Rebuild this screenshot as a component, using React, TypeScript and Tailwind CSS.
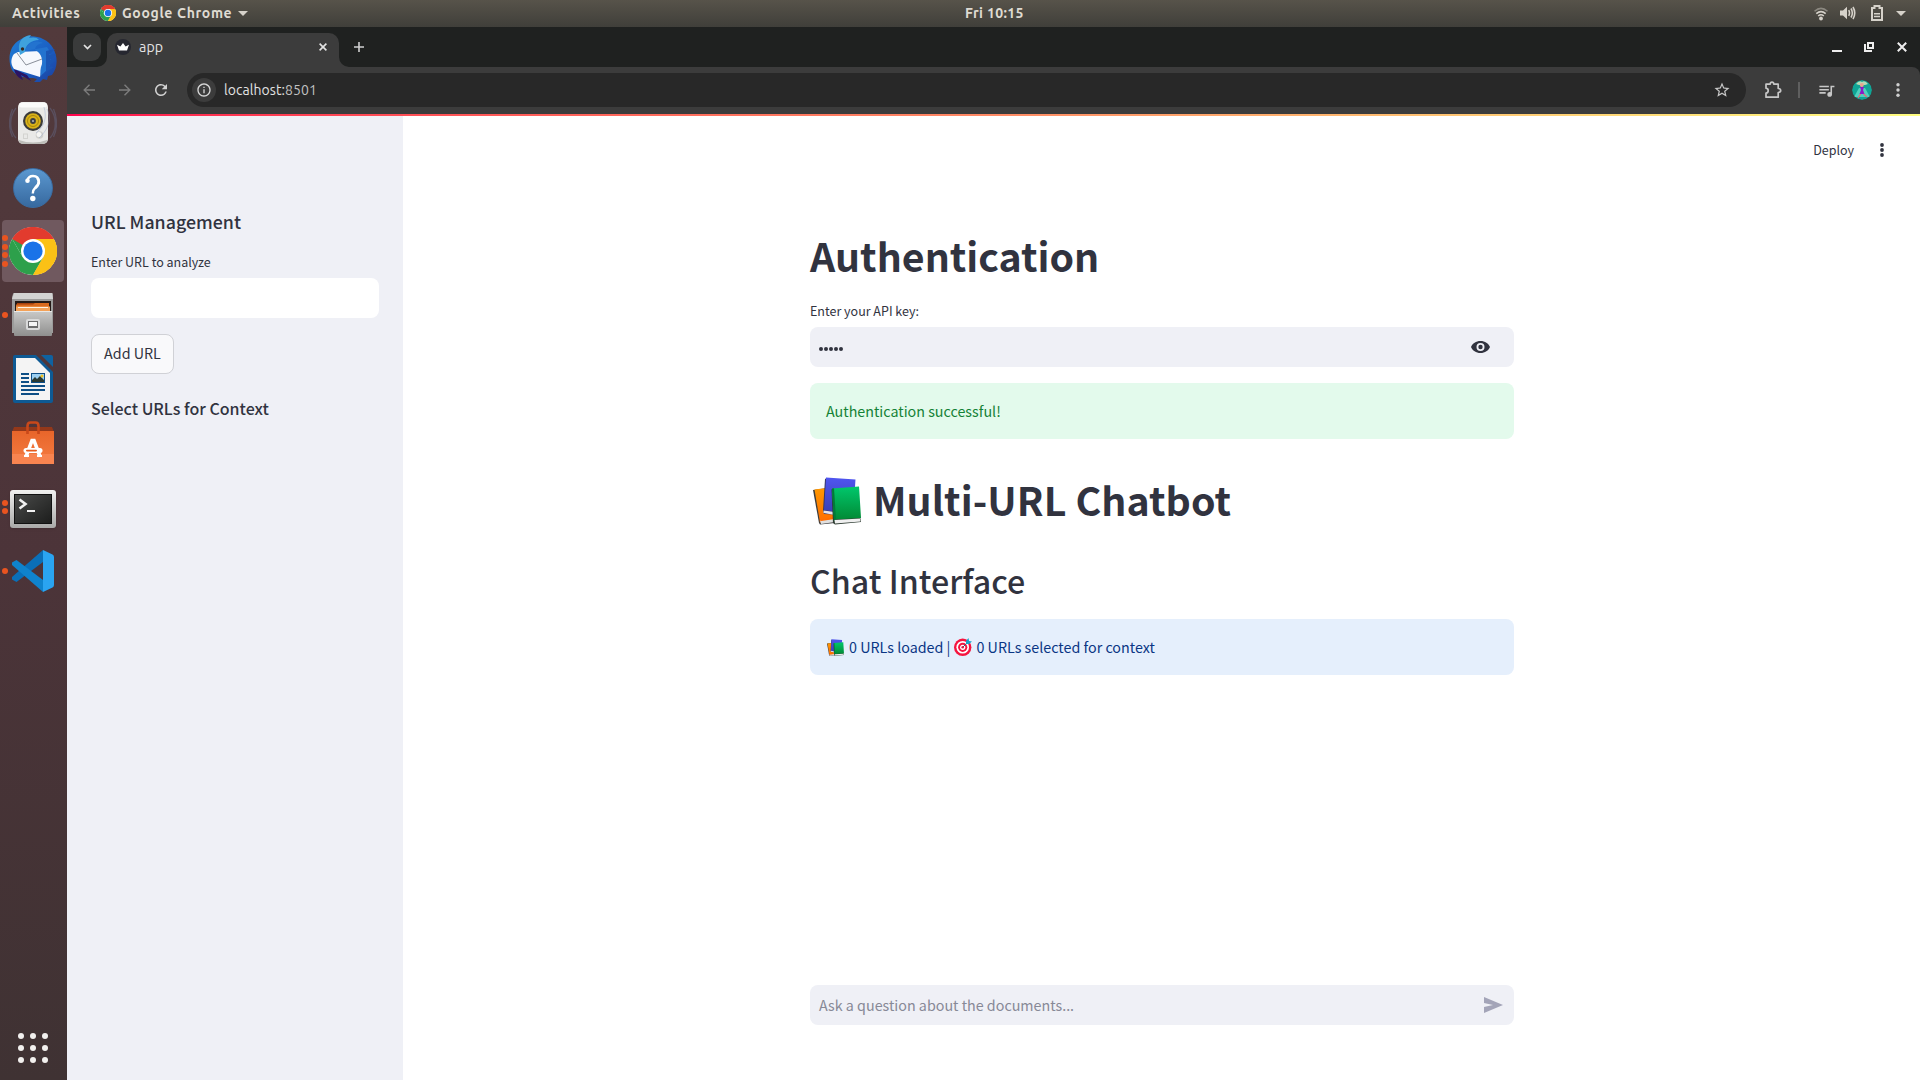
import React from 'react';
import { MdRefresh, MdStarBorder, MdQueueMusic, MdOutlineInfo } from 'react-icons/md';

const UI = "font-['Ubuntu','Noto_Sans',sans-serif]";
const PAGE = "font-['Noto_Sans_CJK_SC','Noto_Sans',sans-serif]";

function ChromeLogo({ size }: { size: number }) {
  return (
    <svg width={size} height={size} viewBox="0 0 48 48">
      <circle cx="24" cy="24" r="24" fill="#fff" />
      <path d="M24 24 3.2 12A24 24 0 0 1 44.8 12Z" fill="#e23b2e" />
      <path d="M44.8 12A24 24 0 0 1 24 48L34.4 30 24 12Z" fill="#fbc116" />
      <path d="M24 48A24 24 0 0 1 3.2 12L13.6 30 34.4 30Z" fill="#2da04b" />
      <path d="M3.2 12 13.6 30 24 12Z" fill="#2da04b" />
      <path d="M3.2 12A24 24 0 0 1 44.8 12H24L13.6 18Z" fill="#e23b2e" />
      <path d="M24 12H44.8A24 24 0 0 1 24 48L34.4 30Z" fill="#fbc116" />
      <circle cx="24" cy="24" r="12" fill="#fff" />
      <circle cx="24" cy="24" r="9.6" fill="#1a73e8" />
    </svg>
  );
}

function Thunderbird() {
  return (
    <svg width="48" height="48" viewBox="0 0 48 48">
      <defs>
        <linearGradient id="tb" x1="0" y1="0" x2="1" y2="1">
          <stop offset="0" stopColor="#1f7fd6" />
          <stop offset=".55" stopColor="#1b5fc4" />
          <stop offset="1" stopColor="#1c3f9c" />
        </linearGradient>
      </defs>
      <path d="M14 3C22-1 38 2 44 13c5 9 5 19-1 27l-4 1-1 4-4-1-3 3-6 0 3-3-4-1C14 43 7 41 3 35-1 27-1 13 9 6Z" fill="url(#tb)" />
      <path d="M5 34c1 6 5 9 9 11l-2-5 10 6-4-6Z" fill="#2a1464" />
      <path d="M9 17 32 16 34 26 31 42 5 34C1 29 2 23 5 19Z" fill="#f6f8fd" />
      <path d="M8 18 17 30 33 24" fill="none" stroke="#8a8f99" strokeWidth="1" />
      <path d="M10 15C9 6 14 1 22 0l-2 3c4-1 8-1 10 2-8 0-14 5-14 12l-5 3Z" fill="#3fa2dd" />
      <path d="M16 16C18 8 26 4 34 8c-6 1-8 4-8 7 5 2 8 8 7 14-2 5-2 9-1 12 2-3 5-4 8-9 3-7 2-15-2-20" fill="#2373cf" />
      <path d="M37 16l9-2-6 6 7-1-6 6 6 0-7 6 5 1-8 5" fill="#1b55b3" />
      <circle cx="13.500" cy="14" r="1.700" fill="#3a2a20" />
    </svg>
  );
}

function Speaker() {
  return (
    <svg width="48" height="48" viewBox="0 0 48 48">
      <g fill="none" stroke="#6d7fa8" strokeOpacity=".32" strokeWidth="1.300">
        <path d="M7 9C0 18 0 31 7 39M41 9C48 18 48 31 41 39M3.500 10C-.5 19-.5 30 3.500 38M44.500 10C48.500 19 48.500 30 44.500 38" />
      </g>
      <rect x="9" y="3" width="30" height="42" rx="5" fill="#e9e9e7" />
      <rect x="10" y="3.500" width="28" height="5" rx="2.500" fill="#fbfbfa" />
      <path d="M10 41q14 5 28 0v1q-1 3-5 3H14q-3 0-4-3Z" fill="#bdbdb9" />
      <circle cx="24" cy="22" r="10" fill="#3b3b3b" />
      <circle cx="24" cy="22" r="7.800" fill="#d9b21a" />
      <circle cx="24" cy="22" r="5.500" fill="none" stroke="#a98608" />
      <circle cx="24" cy="22" r="2.900" fill="#3c3f44" />
      <circle cx="24" cy="22" r="1.100" fill="#a9adb3" />
      <rect x="14.500" y="35" width="4" height="4.500" fill="none" stroke="#d3d3d0" />
      <circle cx="30.500" cy="36" r="3.800" fill="#cfcfcb" />
      <circle cx="30" cy="35.500" r="2.500" fill="#f5f5f3" />
      <path d="M38 10c4 8 3 19-8 29M35 8c3 10 1 19-8 26" fill="none" stroke="#8ea2cc" strokeOpacity=".4" />
    </svg>
  );
}

function Help() {
  return (
    <div className="mt-[2px] flex size-10 items-center justify-center rounded-full border border-[#3a6da3] bg-linear-to-b from-[#5b98d0] to-[#37699f]">
      <svg width="18" height="28" viewBox="0 0 18 28">
        <path d="M3 7C4 3.500 6.500 2 9 2c3.500 0 5.700 2 5.700 5.500C14.700 12.500 8.800 13 8.800 19.500" fill="none" stroke="#fff" strokeWidth="2.400" />
        <path d="M13 4C17 8 14 12 11.500 14" fill="none" stroke="#fff" strokeWidth="2.400" />
        <circle cx="3.500" cy="6.800" r="2.300" fill="#fff" />
        <circle cx="8.800" cy="24.500" r="2.700" fill="#fff" />
      </svg>
    </div>
  );
}

function Files() {
  return (
    <svg width="48" height="48" viewBox="0 0 48 48">
      <defs>
        <linearGradient id="fl" x1="0" y1="0" x2="0" y2="1">
          <stop offset="0" stopColor="#c9c9c8" />
          <stop offset="1" stopColor="#8f8f8e" />
        </linearGradient>
      </defs>
      <path d="M4 3q0-1 1-1H43q1 0 1 1V42H3V6Z" fill="#9c9c9b" />
      <path d="M5 2H43l1 6H3Z" fill="#d3d3d2" />
      <rect x="6" y="10" width="36" height="11" fill="#241a16" />
      <path d="M8 12H40V15H8Z" fill="#a4410e" />
      <path d="M7 13.500H24L26 12H40V20H7Z" fill="#d96a1e" />
      <path d="M7 15.500H41V20H7Z" fill="#f4a258" />
      <path d="M9 16H39V17H9Z" fill="#fff3e3" />
      <rect x="5" y="20" width="38" height="25" rx="1" fill="url(#fl)" />
      <path d="M5 20.500H43" stroke="#e8e8e7" />
      <rect x="17" y="28" width="14" height="11" rx="2" fill="#dadada" />
      <rect x="19" y="30" width="10" height="7" fill="#6b6b6b" />
      <rect x="20" y="31" width="8" height="4" fill="#f4f4f4" />
    </svg>
  );
}

function Writer() {
  return (
    <svg width="40" height="48" viewBox="0 0 40 48">
      <path d="M2 0H23L40 17V46q0 2-2 2H2q-2 0-2-2V2Q0 0 2 0Z" fill="#0e5a94" />
      <path d="M28 0H38q2 0 2 2V12Z" fill="#0f62a0" />
      <path d="M3 3H22L37 18V45H3Z" fill="#f4f4f4" />
      <path d="M8 19H16M8 23H16M8 27H16M8 31H32M8 35H32M8 39H26" stroke="#0e4f86" strokeWidth="2" />
      <rect x="18" y="18" width="14" height="10" fill="#0e4f86" />
      <rect x="19" y="19" width="12" height="8" fill="#9cd0f2" />
      <path d="M19 27v-2l3-3 2 2 3-3 4 4v2Z" fill="#2b3a33" />
      <circle cx="29" cy="21" r="1.500" fill="#f2c11d" />
    </svg>
  );
}

function Software() {
  return (
    <svg width="42" height="44" viewBox="0 0 42 44">
      <defs>
        <linearGradient id="sw" x1="0" y1="0" x2="0" y2="1">
          <stop offset="0" stopColor="#e8652a" />
          <stop offset="1" stopColor="#f57d43" />
        </linearGradient>
      </defs>
      <path d="M2 6H40L42 11H0Z" fill="#93381a" />
      <path d="M0 10H42V43H0Z" fill="url(#sw)" />
      <path d="M0 33H42V43H0Z" fill="#f88450" />
      <path d="M15.500 13V5q0-3.500 3-3.500h5q3 0 3 3.500V13" fill="none" stroke="#c9481a" strokeWidth="2.600" />
      <path d="M14 35.500 20 19.500H22L28 35.500" fill="none" stroke="#fff" strokeWidth="3.600" />
      <path d="M12 35H17M25 35H30" stroke="#fff" strokeWidth="2" />
      <rect x="11.500" y="27" width="19" height="5" rx="2.500" fill="#fff" />
      <rect x="14" y="28.800" width="11" height="1.600" rx=".8" fill="#e55b1c" />
    </svg>
  );
}

function Terminal() {
  return (
    <div className="mt-[3px] h-[38px] w-[46px] rounded-[3px] bg-linear-to-b from-[#f1f1f0] to-[#a9a9a8] p-1 shadow">
      <div className="h-full w-full border border-[#111] bg-linear-to-br from-[#4a4b4a] to-[#1d1e1d]">
        <svg width="36" height="28" viewBox="0 0 36 28">
          <path d="M4.500 4.500 10.500 9 4.500 13.500" fill="none" stroke="#f2f2f2" strokeWidth="2.600" />
          <path d="M12 16H20" stroke="#f2f2f2" strokeWidth="2" />
        </svg>
      </div>
    </div>
  );
}

function VSCode() {
  return (
    <svg width="42" height="42" viewBox="0 0 42 42">
      <path d="M31 0V12L4.500 32 0 29.500V27Z" fill="#0a6fb8" />
      <path d="M31 42V30L4.500 10 0 12.500V15Z" fill="#0f83cd" />
      <path d="M31 0 40.500 4.500Q42 5.200 42 7V35Q42 36.800 40.500 37.500L31 42Z" fill="#2aa4f1" />
    </svg>
  );
}

const dock = [
  { name: 'mail', icon: <Thunderbird />, dots: 0 },
  { name: 'music', icon: <Speaker />, dots: 0 },
  { name: 'help', icon: <Help />, dots: 0 },
  { name: 'chrome', icon: <ChromeLogo size={48} />, dots: 4, active: true },
  { name: 'files', icon: <Files />, dots: 1 },
  { name: 'writer', icon: <Writer />, dots: 0 },
  { name: 'software', icon: <Software />, dots: 0 },
  { name: 'terminal', icon: <Terminal />, dots: 2 },
  { name: 'code', icon: <VSCode />, dots: 1 },
];

function Dock() {
  return (
    <nav className="flex w-[67px] shrink-0 flex-col justify-between bg-linear-to-b from-[#523a3c] via-[#4c3439] to-[#3f3233]">
      <div className="flex flex-col">
        {dock.map((d) => (
          <div key={d.name} className="flex h-16 items-center pl-[2px]">
            <div
              className={
                d.active
                  ? 'relative flex h-[62px] w-[62px] items-center justify-center rounded-[4px] bg-[#70595f]'
                  : 'relative flex h-[62px] w-[62px] items-center justify-center'
              }
            >
              <div className="absolute left-0 flex h-full flex-col justify-center gap-[2.400px]">
                {Array.from({ length: d.dots }, (_, i) => (
                  <span key={i} className="size-[6px] rounded-full bg-[#e95420]" />
                ))}
              </div>
              {d.icon}
            </div>
          </div>
        ))}
      </div>
      <div className="mb-[17px] ml-[18px] grid w-[30px] grid-cols-3 gap-[6px] self-start">
        {Array.from({ length: 9 }, (_, i) => (
          <span key={i} className="size-[6px] rounded-full bg-[#f2f0ee]" />
        ))}
      </div>
    </nav>
  );
}

function TopBar() {
  return (
    <header className={`${UI} grid h-[27px] shrink-0 grid-cols-[965px_auto_1fr] items-center bg-linear-to-b from-[#57534a] to-[#403f3a] text-[14px] leading-[27px] font-bold text-[#dfdbd2]`}>
      <div className="flex items-center pl-3">
        <span className="w-[88px] tracking-[0.620px]">Activities</span>
        <div className="mb-[2px]"><ChromeLogo size={16} /></div>
        <span className="ml-[6px] w-[116px] whitespace-nowrap tracking-[0.660px]">Google Chrome</span>
        <svg width="10" height="5" viewBox="0 0 10 5"><path d="M0 0H10L5 5Z" fill="#d6d2ca" /></svg>
      </div>
      <div className="whitespace-nowrap tracking-[0.350px]">Fri 10:15</div>
      <div className="flex items-center justify-end pr-[14px]">
        <svg className="mr-[12px]" width="14" height="14" viewBox="0 0 14 14" fill="none">
          <path d="M.5 4.200Q7-1.500 13.500 4.200" stroke="#8b8880" strokeWidth="1.500" />
          <path d="M2.300 6.700Q7 2.500 11.700 6.700" stroke="#d6d2ca" strokeWidth="1.600" />
          <path d="M4.200 9Q7 6.500 9.800 9" stroke="#d6d2ca" strokeWidth="1.600" />
          <circle cx="7" cy="11.500" r="1.900" fill="#d6d2ca" />
        </svg>
        <svg className="mr-[15px] mb-[1px]" width="16" height="14" viewBox="0 0 16 14" fill="none" stroke="#d6d2ca" strokeWidth="1.600">
          <path d="M0 4.500H3L7 .8V13.200L3 9.500H0Z" fill="#d6d2ca" stroke="none" />
          <path d="M8.700 4.200Q10.300 7 8.700 9.800M11 2.500Q13.700 7 11 11.500M13 1Q16.500 7 13 13" />
        </svg>
        <svg className="mr-[13px] mb-[1px]" width="12" height="16" viewBox="0 0 12 16" fill="none" stroke="#d6d2ca">
          <path d="M1 3H3.500V1H8.500V3H11V15H1Z" strokeWidth="2" />
          <path d="M3 8.700H9M3 11.500H9" strokeWidth="1.500" />
        </svg>
        <svg width="10" height="5" viewBox="0 0 10 5"><path d="M0 0H10L5 5Z" fill="#d6d2ca" /></svg>
      </div>
    </header>
  );
}

function TabStrip() {
  return (
    <div className="flex h-10 items-end bg-[#1f2120]">
      <div className="mb-[6px] ml-[6px] flex size-7 items-center justify-center rounded-[9px] bg-[#3a3b3b]">
        <svg width="9" height="6" viewBox="0 0 9 6"><path d="M1 1 4.500 4.500 8 1" fill="none" stroke="#e3e3e3" strokeWidth="1.700" /></svg>
      </div>
      <svg className="-ml-[4px]" width="10" height="10" viewBox="0 0 10 10"><path d="M10 0V10H0A10 10 0 0 0 10 0Z" fill="#3c3c3c" /></svg>
      <div className="flex h-[34px] w-[232px] items-center rounded-t-[10px] bg-[#3c3c3c] pb-[6px] pl-2">
        <div className="flex size-4 items-center justify-center rounded-full bg-[#262730]">
          <svg width="12" height="8" viewBox="0 0 12 8"><path d="M0 1.800 3.400 3.500 6 0 8.600 3.500 12 1.800 10 7.500H2Z" fill="#fff" /></svg>
        </div>
        <span className="ml-2 text-[14.200px] leading-7 tracking-[0.100px] text-[#e3e3e3]">app</span>
        <svg className="mr-3 ml-auto" width="8" height="8" viewBox="0 0 8 8"><path d="M.6.6 7.400 7.400M7.400.6.6 7.400" stroke="#e3e3e3" strokeWidth="1.600" /></svg>
      </div>
      <svg width="10" height="10" viewBox="0 0 10 10"><path d="M0 0V10H10A10 10 0 0 1 0 0Z" fill="#3c3c3c" /></svg>
      <svg className="mb-[15px] ml-[5px]" width="10" height="10" viewBox="0 0 10 10"><path d="M5 0V10M0 5H10" stroke="#d0d0d0" strokeWidth="1.600" /></svg>
      <div className="mr-[13px] ml-auto flex h-full items-center">
        <svg className="mr-[22px]" width="10" height="10" viewBox="0 0 10 10"><path d="M0 9H10" stroke="#eee" strokeWidth="2" /></svg>
        <svg className="mr-[23px]" width="10" height="10" viewBox="0 0 10 10" fill="none" stroke="#eee" strokeWidth="2"><path d="M4 1H9V6H4ZM1 2V9H8" /></svg>
        <svg width="10" height="10" viewBox="0 0 10 10"><path d="M.8.8 9.200 9.200M9.200.8.8 9.200" stroke="#eee" strokeWidth="2" /></svg>
      </div>
    </div>
  );
}

function Toolbar() {
  return (
    <div className="h-[47px] shrink-0 bg-[#1f2120]">
      <div className="flex h-full items-center rounded-tr-[8px] bg-[#3c3c3c] pr-[20px] pb-[1px] pl-4">
        <svg width="12" height="12" viewBox="0 0 12 12"><path d="M6.500.7 1.200 6 6.500 11.300M1.200 6H12" fill="none" stroke="#7c7c7c" strokeWidth="1.400" /></svg>
        <svg className="ml-6" width="12" height="12" viewBox="0 0 12 12"><path d="M5.500.7 10.800 6 5.500 11.300M10.800 6H0" fill="none" stroke="#7c7c7c" strokeWidth="1.400" /></svg>
        <MdRefresh className="ml-[21px]" size={18} color="#d2d2d2" />
        <div className="ml-[17px] flex h-[34px] flex-1 items-center rounded-full bg-[#282828] pl-[5px]">
          <div className="flex size-6 items-center justify-center rounded-full bg-[#3c3c3c]">
            <MdOutlineInfo size={16} color="#d8d8d8" />
          </div>
          <span className="ml-2 text-[14px] tracking-[0.060px] text-[#e3e3e3]">localhost:<span className="text-[#c2c2c2]">8501</span></span>
          <MdStarBorder className="mr-[15px] ml-auto" size={18} color="#c7c7c7" />
        </div>
        <svg className="ml-[19px]" width="17" height="18" viewBox="0 0 17 18">
          <path d="M1 3.200H5.200Q5.300 1.200 7 1.200T8.800 3.200H13.200V7.500Q15.700 7.600 15.700 9.500T13.200 11.500V16.200H1V12.200Q3.200 11.800 3.200 9.700T1 7.200Z" fill="none" stroke="#c7c7c7" strokeWidth="1.700" strokeLinejoin="round" />
        </svg>
        <div className="ml-[16px] h-4 w-[2px] bg-[#5f5f5f]" />
        <MdQueueMusic className="ml-[17px]" size={19} color="#c7c7c7" />
        <svg className="ml-[16px] rounded-full" width="20" height="20" viewBox="0 0 20 20">
          <circle cx="10" cy="10" r="10" fill="#10a596" />
          <path d="M7 8 2 17H18L13 8Z" fill="#4fd0bd" />
          <path d="M4 4Q7 0 10 2 13 0 16 4L13 5H7Z" fill="#b9d9b4" />
          <circle cx="9.800" cy="5" r="2" fill="#e9a48f" />
          <path d="M8 7H12L11 10 12.500 14H7.500L9 10Z" fill="#8a18c8" />
          <path d="M8.500 14 6 18M11.500 14 15 17" stroke="#e46a78" strokeWidth="1.300" />
        </svg>
        <svg className="ml-[24px]" width="4" height="14" viewBox="0 0 4 14" fill="#d0d0d0"><circle cx="2" cy="1.800" r="1.700" /><circle cx="2" cy="7" r="1.700" /><circle cx="2" cy="12.200" r="1.700" /></svg>
      </div>
    </div>
  );
}

function Books({ size, className }: { size: number; className: string }) {
  return (
    <svg className={className} width={size} height={size} viewBox="0 0 48 48">
      <defs>
        <linearGradient id="bo" x1="0" y1="0" x2="0" y2="1"><stop offset="0" stopColor="#ff9800" /><stop offset="1" stopColor="#ff6d00" /></linearGradient>
        <linearGradient id="bb" x1="0" y1="0" x2="0" y2="1"><stop offset="0" stopColor="#4f55f0" /><stop offset="1" stopColor="#3a3fb0" /></linearGradient>
        <linearGradient id="bg" x1="0" y1="0" x2="0" y2="1"><stop offset="0" stopColor="#00c76c" /><stop offset="1" stopColor="#028a35" /></linearGradient>
      </defs>
      <path d="M0 13 6 46 7 47.500 22 46V10Z" fill="#3d3d3d" />
      <path d="M1.500 12.500 13 11 22 43 7 45.500Z" fill="url(#bo)" />
      <path d="M7 43.500 21 41.500 22 45 8 47Z" fill="#e0e0e0" />
      <path d="M7 43 22 40V42L8 44Z" fill="#ff6d00" />
      <path d="M12 1.500 10 34 11 37 30 38V10Z" fill="#35365a" />
      <path d="M13 .5 42.500 2.500 40 38 11 33Z" fill="url(#bb)" />
      <path d="M10.500 33.500 22 35V38L10.500 36Z" fill="#e4e4ec" />
      <path d="M18.500 12 20 46 22 47.500 48 45 48 42Z" fill="#2c3a30" />
      <path d="M19 11.500 46 9.500 48 41 21 42.500Z" fill="url(#bg)" />
      <path d="M19 11.500 21 11.300 23 42.500 21 44Z" fill="#027a38" />
      <path d="M21.500 43 47.500 41.500V44.500L22 46.500Z" fill="#f0f0f0" />
    </svg>
  );
}

function Target() {
  return (
    <svg className="mr-[4px] ml-[4px]" width="18" height="18" viewBox="0 0 18 18">
      <circle cx="8.700" cy="9.300" r="8.700" fill="#f5143f" />
      <circle cx="8.700" cy="9.300" r="6.300" fill="#fff" />
      <circle cx="8.700" cy="9.300" r="4.600" fill="#f5143f" />
      <circle cx="8.700" cy="9.300" r="2.600" fill="#fff" />
      <circle cx="8.700" cy="9.300" r="1.300" fill="#f5143f" />
      <path d="M8.700 9.300 13.500 4.500" stroke="#34617a" strokeWidth="1" />
      <path d="M12 6V3L14.500 0 15 3 18 3.500 15 6Z" fill="#1aa3c8" />
    </svg>
  );
}

function Sidebar() {
  return (
    <aside className="w-[336px] shrink-0 bg-[#eff0f6] px-6 pt-[95px]">
      <h3 className="h-6 text-[17.800px] leading-6 font-medium">URL Management</h3>
      <p className="mt-[19px] h-5 text-[12.500px] leading-5">Enter URL to analyze</p>
      <div className="mt-[6px] h-10 rounded-lg bg-white" />
      <button className="mt-4 flex h-10 w-[83px] items-center justify-center rounded-lg border border-[#d0d1d6] bg-[#f9f9fb] pb-[2px] text-[14.300px] leading-5">
        Add URL
      </button>
      <h4 className="mt-[22px] h-6 text-[16px] leading-6 font-medium">Select URLs for Context</h4>
    </aside>
  );
}

function Main() {
  return (
    <main className="grid flex-1 grid-cols-[407px_704px_406px] bg-white">
      <div className="col-start-2 flex flex-col">
        <h1 className="mt-[115px] h-[52px] text-[39.300px] leading-[52px] font-bold">Authentication</h1>
        <p className="mt-5 h-5 text-[12.500px] leading-5">Enter your API key:</p>
        <div className="mt-[6px] flex h-10 items-center justify-between rounded-lg bg-[#eff0f6] pr-6 pl-[9px]">
          <div className="mt-[3px] flex gap-[1px]">
            {Array.from({ length: 5 }, (_, i) => <span key={i} className="size-1 rounded-full bg-[#31333f]" />)}
          </div>
          <svg width="19" height="12" viewBox="0 0 19 12">
            <path fillRule="evenodd" d="M9.500 0C14 0 17.500 2.500 19 6 17.500 9.500 14 12 9.500 12S1.500 9.500 0 6C1.500 2.500 5 0 9.500 0ZM9.500 2A4 4 0 1 0 9.500 10 4 4 0 0 0 9.500 2Z" fill="#31333f" />
            <circle cx="9.500" cy="6" r="2.200" fill="#31333f" />
          </svg>
        </div>
        <div className="mt-4 h-14 rounded-lg bg-[#e3faec] px-4 text-[14.300px] leading-[56px] text-[#158237]">Authentication successful!</div>
        <h1 className="mt-[34px] flex h-[52px] items-center text-[39.300px] leading-[52px] font-bold tracking-[0.060px]">
          <Books size={48} className="mt-[4px] mr-[12px] ml-[3px]" />
          Multi-URL Chatbot
        </h1>
        <h2 className="mt-[33px] h-11 text-[32.200px] leading-[44px] font-medium">Chat Interface</h2>
        <div className="mt-[17px] flex h-14 items-center rounded-lg bg-[#e5effc] pl-[17px] text-[14.300px] leading-5 whitespace-nowrap text-[#0a3684]">
          <Books size={17} className="mr-[5px]" />
          0 URLs loaded |
          <Target />
          0 URLs selected for context
        </div>
        <div className="mt-auto mb-[55px] flex h-10 items-center justify-between rounded-lg bg-[#eff0f6] pr-[11px] pl-[9px]">
          <span className="text-[14.300px] leading-10 text-[#878996]">Ask a question about the documents...</span>
          <svg width="19" height="16" viewBox="0 0 19 16"><path d="M0 0 19 8 0 16V10L9 8 0 6Z" fill="#a3a4b8" /></svg>
        </div>
      </div>
      <div className="flex items-start justify-end pr-[36px]">
        <span className="mt-[26px] text-[12.500px] leading-5">Deploy</span>
        <svg className="mt-[29px] ml-[26px]" width="4" height="14" viewBox="0 0 4 14" fill="#31333f"><circle cx="2" cy="2" r="1.900" /><circle cx="2" cy="7" r="1.900" /><circle cx="2" cy="12" r="1.900" /></svg>
      </div>
    </main>
  );
}

export default function App() {
  return (
    <div className="flex h-[1080px] w-[1920px] flex-col overflow-hidden">
      <TopBar />
      <div className="flex min-h-0 flex-1">
        <Dock />
        <div className="flex flex-1 flex-col">
          <div className={UI}>
            <TabStrip />
            <Toolbar />
          </div>
          <div className={`${PAGE} relative flex min-h-0 flex-1 text-[#31333f]`}>
            <div className="absolute inset-x-0 top-0 h-[2px] bg-linear-to-r from-[#ff004d] via-[#ff8a65] to-[#fffd80]" />
            <Sidebar />
            <Main />
          </div>
        </div>
      </div>
    </div>
  );
}
